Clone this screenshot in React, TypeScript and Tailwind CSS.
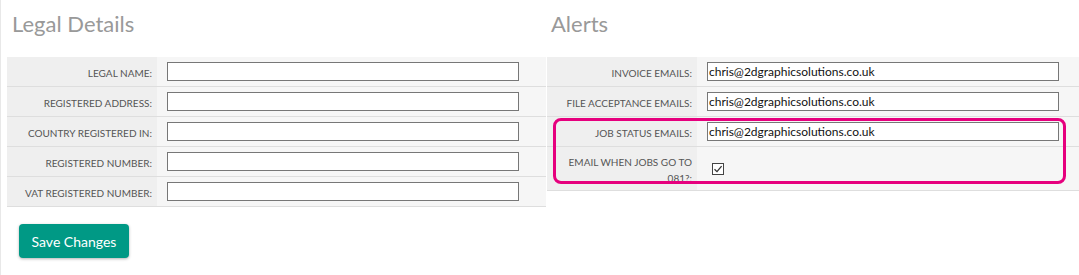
import React from "react";

type FieldProps = {
  label: React.ReactNode;
  value?: string;
  checkbox?: boolean;
};

function Field({ label, value = "", checkbox }: FieldProps) {
  return (
    <div className="flex min-h-[30px] border-b border-[#dedede]">
      <div className="flex w-[150px] shrink-0 items-center justify-end bg-[#efefef] pt-[7px] pr-[5px] pb-[4px] text-right text-[10px] leading-[16px] text-[#555] uppercase">
        {label}
      </div>
      <div className="flex flex-1 items-center bg-[#f6f6f6] pl-[10px]">
        {checkbox ? (
          <span className="ml-[5px] flex h-[12px] w-[12px] items-center justify-center border border-[#444] bg-white">
            <svg width="10" height="10" viewBox="0 0 10 10" fill="none">
              <path d="M1.5 5.2 L4 7.6 L8.6 2.2" stroke="#333" strokeWidth="1.3" />
            </svg>
          </span>
        ) : (
          <input
            readOnly
            value={value}
            className="h-[19px] w-[352px] border border-[#777] bg-white px-[1px] text-[12px] text-[#111] outline-none"
          />
        )}
      </div>
    </div>
  );
}

export default function App() {
  const email = "chris@2dgraphicsolutions.co.uk";

  return (
    <div className="flex h-[275px] w-[1079px] border-l border-[#e8e8e8] bg-white font-['Lato',sans-serif]">
      <div className="w-[546px] shrink-0 pr-[1px] pl-[6px]">
        <h2 className="mt-[10px] pl-[5px] text-[22px] leading-[27px] text-[#999]">Legal Details</h2>
        <div className="mt-[20px]">
          <Field label="Legal Name:" />
          <Field label="Registered Address:" />
          <Field label="Country Registered In:" />
          <Field label="Registered Number:" />
          <Field label="VAT Registered Number:" />
        </div>
        <button className="mt-[17px] ml-[12px] h-[34px] w-[110px] rounded-[4px] bg-[#009985] text-[14px] text-white shadow-[0_1px_3px_rgba(0,0,0,0.3)]">
          Save Changes
        </button>
      </div>
      <div className="flex-1">
        <h2 className="mt-[10px] pl-[4px] text-[22px] leading-[27px] text-[#999]">Alerts</h2>
        <div className="relative mt-[20px]">
          <Field label="Invoice Emails:" value={email} />
          <Field label="File Acceptance Emails:" value={email} />
          <Field label="Job Status Emails:" value={email} />
          <Field
            label={
              <span>
                Email when jobs go to
                <br />
                081?:
              </span>
            }
            checkbox
          />
          <div className="pointer-events-none absolute top-[61px] left-[6px] h-[66px] w-[513px] rounded-[8px] border-[3px] border-[#e6007e]" />
        </div>
      </div>
    </div>
  );
}
